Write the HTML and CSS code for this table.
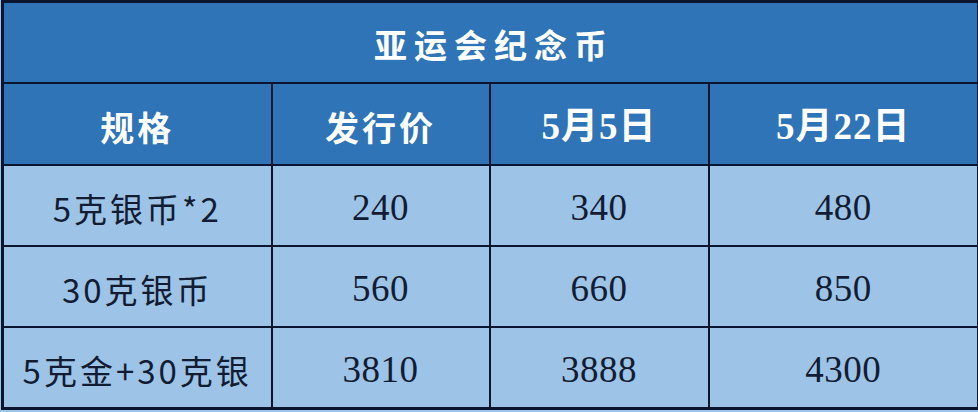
FILE: index.html
```html
<!DOCTYPE html>
<html lang="zh">
<head>
<meta charset="utf-8">
<title>亚运会纪念币</title>
<link rel="stylesheet" href="styles.css">
</head>
<body>
<table class="coins">
  <colgroup>
    <col class="c1"><col class="c2"><col class="c3"><col class="c4">
  </colgroup>
  <tr class="title-row"><th colspan="4">亚运会纪念币</th></tr>
  <tr class="head-row">
    <th class="cjk">规格</th>
    <th class="cjk">发行价</th>
    <th class="date">5月5日</th>
    <th class="date">5月22日</th>
  </tr>
  <tr class="data-row">
    <td class="name">5克银币*2</td><td class="num">240</td><td class="num">340</td><td class="num">480</td>
  </tr>
  <tr class="data-row">
    <td class="name">30克银币</td><td class="num">560</td><td class="num">660</td><td class="num">850</td>
  </tr>
  <tr class="data-row">
    <td class="name">5克金+30克银</td><td class="num">3810</td><td class="num">3888</td><td class="num">4300</td>
  </tr>
</table>
</body>
</html>
```

FILE: styles.css
```css
html, body {
  margin: 0;
  padding: 0;
  background: #9dc3e6;
}
.coins {
  width: 976px;
  border-collapse: collapse;
  table-layout: fixed;
  border: 3px solid #0b1530;
  margin-left: 1px;
}
.coins .c1 { width: 269px; }
.coins .c2 { width: 218px; }
.coins .c3 { width: 219px; }
.coins .c4 { width: 270px; }
.coins th, .coins td {
  border: 2px solid #0b1530;
  padding: 0;
  text-align: center;
  vertical-align: middle;
  line-height: 1.2;
}
.title-row th {
  height: 75px;
  background: #2e74b7;
  color: #ffffff;
  font-family: "Noto Sans CJK SC", "Noto Sans", sans-serif;
  font-weight: 700;
  font-size: 33px;
  letter-spacing: 7px;
  padding-left: 7px;
  padding-top: 4px;
}
.head-row th {
  height: 74px;
  background: #2e74b7;
  color: #ffffff;
  font-weight: 700;
  padding-top: 6px;
}
.head-row .cjk {
  font-family: "Noto Sans CJK SC", "Noto Sans", sans-serif;
  font-size: 34px;
  letter-spacing: 3px;
}
.head-row .date {
  font-family: "Liberation Serif", "Noto Sans CJK SC", serif;
  font-size: 37px;
  letter-spacing: 1px;
}
.data-row td {
  height: 73px;
  background: #9dc3e6;
  color: #121c33;
  padding-top: 6px;
}
.data-row .name {
  font-family: "Noto Sans CJK SC", "Noto Sans", sans-serif;
  font-size: 33px;
  letter-spacing: 3px;
}
.data-row .num {
  font-family: "Liberation Serif", serif;
  font-size: 37px;
  letter-spacing: 0.5px;
}
```
